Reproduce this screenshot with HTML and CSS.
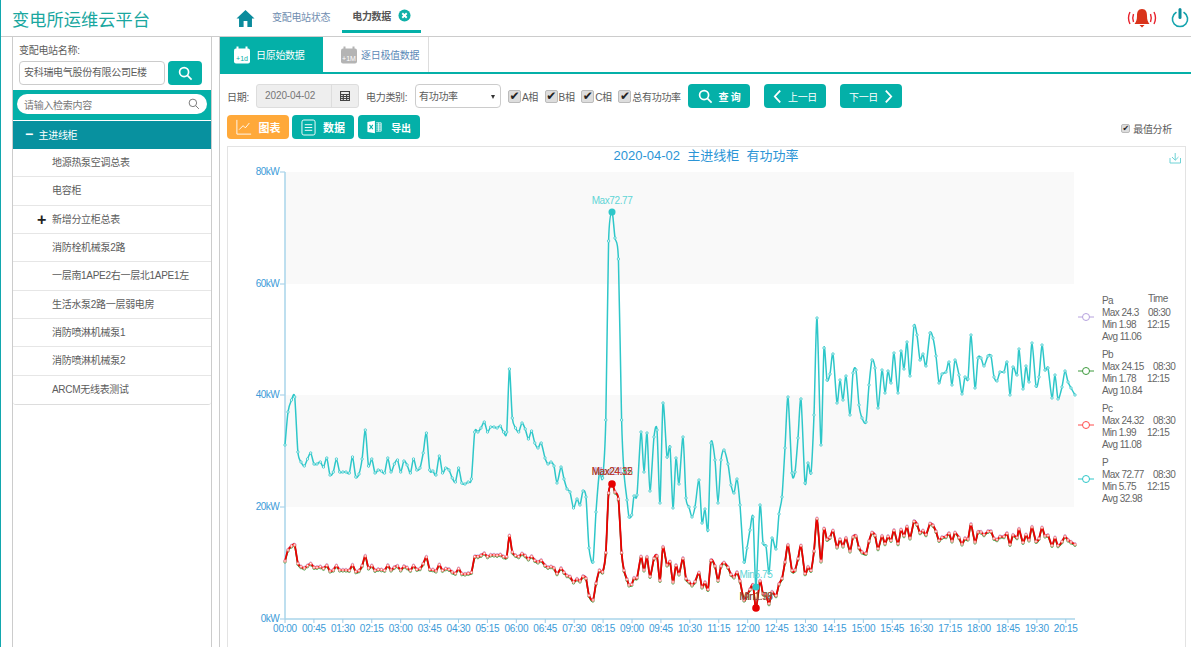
FILE: index.html
```html
<!DOCTYPE html>
<html lang="zh-CN">
<head>
  <meta charset="UTF-8">
  <title>变电所运维云平台</title>
  <link rel="stylesheet" href="styles.css">
</head>
<body>
  <header class="topbar">
    <div class="brand">变电所运维云平台</div>
    <nav class="nav">
      <svg class="home-icon" viewBox="0 0 20 20"><path d="M10 1 L0.5 10 H3.2 V19 H8 V12.5 H12 V19 H16.8 V10 H19.5 Z"/></svg>
      <a class="nav-item">变配电站状态</a>
      <a class="nav-item nav-active">电力数据
        <svg class="close-icon" viewBox="0 0 14 14"><circle cx="7" cy="7" r="6.5"/><path d="M4.6 4.6 L9.4 9.4 M9.4 4.6 L4.6 9.4"/></svg>
      </a>
    </nav>
    <div class="top-actions">
      <svg class="bell-icon" viewBox="0 0 32 20">
        <path class="bell-wave" d="M4 4 Q1 10 4 16 M7.5 6 Q6 10 7.5 14 M28 4 Q31 10 28 16 M24.500 6 Q26 10 24.500 14"/>
        <path class="bell-body" d="M16 1 C12 1 11 4 11 8 C11 12 10 14 8.500 16 H23.500 C22 14 21 12 21 8 C21 4 20 1 16 1 Z M13.500 17 H18.500 L16 19.500 Z"/>
      </svg>
      <svg class="power-icon" viewBox="0 0 18 20">
        <path class="power-ring" d="M5 4.500 A7.600 7.600 0 1 0 13 4.500"/>
        <path class="power-bar" d="M9 1.500 V9.500"/>
      </svg>
    </div>
  </header>

  <div class="layout">
    <aside class="sidebar">
      <div class="station">
        <div class="station-label">变配电站名称:</div>
        <div class="station-row">
          <div class="station-input">安科瑞电气股份有限公司E楼</div>
          <button class="btn station-btn">
            <svg class="search-icon" viewBox="0 0 16 16"><circle cx="6.500" cy="6.500" r="4.800"/><path d="M10 10 L14.500 14.500"/></svg>
          </button>
        </div>
      </div>
      <div class="filter-band">
        <div class="filter-pill">
          <span>请输入检索内容</span>
          <svg class="filter-icon" viewBox="0 0 16 16"><circle cx="6.500" cy="6.500" r="5"/><path d="M10.200 10.200 L14.500 14.500"/></svg>
        </div>
      </div>
      <ul class="tree">
        <li class="tree-root"><span class="tree-sign">−</span>主进线柜</li>
        <li class="tree-item">地源热泵空调总表</li>
        <li class="tree-item">电容柜</li>
        <li class="tree-item"><span class="tree-plus">+</span>新增分立柜总表</li>
        <li class="tree-item">消防栓机械泵2路</li>
        <li class="tree-item">一层南1APE2右一层北1APE1左</li>
        <li class="tree-item">生活水泵2路一层弱电房</li>
        <li class="tree-item">消防喷淋机械泵1</li>
        <li class="tree-item">消防喷淋机械泵2</li>
        <li class="tree-item">ARCM无线表测试</li>
      </ul>
    </aside>

    <main class="content">
      <div class="tabs">
        <div class="tab tab-active">
          <svg class="cal-icon" viewBox="0 0 18 18">
            <rect class="cal-body" x="1" y="2.500" width="16" height="15" rx="2"/>
            <path class="cal-pins" d="M4.500 0.500 V4 M13.500 0.500 V4"/>
            <text class="cal-text" x="9" y="14.500">+1d</text>
          </svg>
          日原始数据
        </div>
        <div class="tab tab-plain">
          <svg class="cal-icon cal-gray" viewBox="0 0 18 18">
            <rect class="cal-body" x="1" y="2.500" width="16" height="15" rx="2"/>
            <path class="cal-pins" d="M4.500 0.500 V4 M13.500 0.500 V4"/>
            <text class="cal-text" x="9" y="14.500">+1M</text>
          </svg>
          逐日极值数据
        </div>
      </div>

      <div class="toolbar">
        <span class="field-label date-label">日期:</span>
        <div class="date-group">
          <span class="date-value">2020-04-02</span>
          <span class="date-addon">
            <svg class="mini-cal" viewBox="0 0 10 10"><path d="M0.500 0.500 H9.500 V9.500 H0.500 Z M0 3.500 H10 M0 5.500 H10 M0 7.500 H10 M3.300 3 V10 M6.600 3 V10"/></svg>
          </span>
        </div>
        <span class="field-label type-label">电力类别:</span>
        <div class="type-select">有功功率</div>
        <div class="checks">
          <label class="check"><span class="box">✔</span>A相</label>
          <label class="check"><span class="box">✔</span>B相</label>
          <label class="check"><span class="box">✔</span>C相</label>
          <label class="check"><span class="box">✔</span>总有功功率</label>
        </div>
        <button class="btn tool-btn query-btn">
          <svg class="search-icon" viewBox="0 0 16 16"><circle cx="6.500" cy="6.500" r="4.800"/><path d="M10 10 L14.500 14.500"/></svg>
          查 询
        </button>
        <button class="btn tool-btn prev-btn">
          <svg class="chev-icon" viewBox="0 0 10 16"><path d="M8 1.500 L2 8 L8 14.500"/></svg>
          上一日
        </button>
        <button class="btn tool-btn next-btn">
          下一日
          <svg class="chev-icon" viewBox="0 0 10 16"><path d="M2 1.500 L8 8 L2 14.500"/></svg>
        </button>
      </div>

      <div class="toolbar toolbar-second">
        <button class="btn view-btn view-orange">
          <svg class="view-icon" viewBox="0 0 18 18"><path d="M1 1 V17 H17 M3.500 12 L8 7.500 L10.500 10 L15 4.500"/></svg>
          图表
        </button>
        <button class="btn view-btn">
          <svg class="view-icon list-icon" viewBox="0 0 16 18"><rect x="1" y="1" width="14" height="16" rx="2"/><path d="M4 6 H12 M4 9 H12 M4 12 H12"/></svg>
          数据
        </button>
        <button class="btn view-btn export-btn">
          <svg class="excel-icon" viewBox="0 0 18 16">
            <path class="excel-sheet" d="M0.500 2 L9.500 0.500 V15.500 L0.500 14 Z"/>
            <path class="excel-grid" d="M11 3 H17 V13 H11 M11 5.500 H17 M11 8 H17 M11 10.500 H17 M14 3 V13"/>
            <path class="excel-x" d="M3 5.500 L7 10.500 M7 5.500 L3 10.500"/>
          </svg>
          导出
        </button>
        <label class="check analysis"><span class="box box-small">✔</span>最值分析</label>
      </div>

      <section class="chart-panel">
        <svg id="chart" class="chart" viewBox="228 147 957 500"></svg>
      </section>
    </main>
  </div>

  <script src="chart.js"></script>
</body>
</html>
```

FILE: styles.css
```css
* {
  box-sizing: border-box;
  margin: 0;
  padding: 0;
}

html, body {
  height: 647px;
  overflow: hidden;
}

body {
  font-family: "Liberation Sans", "Noto Sans CJK SC", sans-serif;
  font-size: 10px;
  letter-spacing: -0.300px;
  color: #5c5c5c;
  background: #fff;
  border-left: 1px solid #12a7ae;
}

.topbar {
  display: flex;
  align-items: center;
  height: 37px;
  border-bottom: 1px solid #ccc;
}

.brand {
  width: 218px;
  padding-left: 11px;
  font-size: 17.250px;
  letter-spacing: 0;
  color: #1aa79f;
}

.nav {
  display: flex;
  align-items: center;
  height: 36px;
  padding-left: 17px;
}

.home-icon {
  width: 19px;
  height: 19px;
  fill: #0a8b9c;
  margin-right: 17px;
}

.nav-item {
  color: #6f8db0;
  margin-right: 12px;
  margin-bottom: 4px;
}

.nav-active {
  display: flex;
  align-items: center;
  align-self: flex-start;
  gap: 7px;
  height: 33px;
  margin-right: 0;
  margin-bottom: 0;
  padding: 0 10px;
  color: #555;
  font-weight: bold;
  border-bottom: 3px solid #04b0a8;
}

.close-icon {
  width: 13px;
  height: 13px;
}

.close-icon circle {
  fill: #0fb0a8;
}

.close-icon path {
  stroke: #fff;
  stroke-width: 2;
  fill: none;
}

.top-actions {
  display: flex;
  align-items: center;
  gap: 13px;
  margin-left: auto;
  padding-right: 2px;
}

.bell-icon {
  width: 32px;
  height: 20px;
}

.bell-wave {
  fill: none;
  stroke: #e8222c;
  stroke-width: 1.400;
}

.bell-body {
  fill: #d9331a;
}

.power-icon {
  width: 18px;
  height: 20px;
  fill: none;
  stroke-linecap: round;
}

.power-ring {
  stroke: #15a4ae;
  stroke-width: 1.600;
}

.power-bar {
  stroke: #0b8e9c;
  stroke-width: 3;
}

.layout {
  display: flex;
  height: 610px;
}

.sidebar {
  width: 200px;
  margin-left: 11px;
  border-left: 1px solid #ccc;
  border-right: 1px solid #ccc;
}

.station {
  height: 53px;
  padding: 8px 6px 0;
}

.station-label {
  line-height: 12px;
  margin-bottom: 4px;
}

.station-row {
  display: flex;
  gap: 3px;
}

.station-input {
  width: 146px;
  height: 24px;
  padding-left: 4px;
  line-height: 22px;
  border: 1px solid #ccc;
  border-radius: 4px;
  white-space: nowrap;
}

.btn {
  display: inline-flex;
  align-items: center;
  justify-content: center;
  border: none;
  border-radius: 4px;
  background: #04b0a8;
  color: #fff;
  font: inherit;
  letter-spacing: inherit;
}

.station-btn {
  width: 34px;
  height: 24px;
}

.search-icon {
  width: 15px;
  height: 15px;
  fill: none;
  stroke: #fff;
  stroke-width: 1.800;
}

.filter-band {
  height: 30px;
  padding: 4px 4px 0;
  background: #04b0a8;
}

.filter-pill {
  display: flex;
  align-items: center;
  justify-content: space-between;
  width: 190px;
  height: 20px;
  padding: 0 7px 0 7px;
  background: #fff;
  border-radius: 10px;
  color: #777;
}

.filter-icon {
  width: 12px;
  height: 12px;
  fill: none;
  stroke: #777;
  stroke-width: 1.300;
}

.tree {
  list-style: none;
  margin-top: 1px;
  border-bottom: 1px solid #ddd;
  border-radius: 0 0 3px 3px;
}

.tree-root {
  height: 28px;
  line-height: 27px;
  padding-left: 12px;
  background: #08919f;
  color: #fff;
}

.tree-sign {
  display: inline-block;
  width: 13.500px;
  font-size: 14px;
  font-weight: bold;
}

.tree-item {
  position: relative;
  height: 28.330px;
  line-height: 28px;
  padding-left: 39px;
  border-bottom: 1px solid #e6e6e6;
}

.tree-item:last-child {
  border-bottom: none;
}

.tree-plus {
  position: absolute;
  left: 24px;
  font-size: 16px;
  font-weight: bold;
  color: #222;
}

.content {
  flex: 1;
  margin-left: 7px;
  border-left: 1px solid #ccc;
  min-width: 0;
}

.tabs {
  display: flex;
  height: 37px;
  border-bottom: 2px solid #04b0a8;
}

.tab {
  display: flex;
  align-items: center;
  gap: 5px;
  height: 35px;
}

.tab-active {
  width: 103px;
  padding-left: 13px;
  background: #04b0a8;
  color: #fff;
}

.tab-plain {
  width: 106px;
  padding-left: 17px;
  gap: 3px;
  color: #5b8ab8;
  border-right: 1px solid #ddd;
}

.cal-icon {
  width: 18px;
  height: 18px;
}

.cal-body {
  fill: #fff;
}

.cal-pins {
  stroke: #fff;
  stroke-width: 2;
}

.cal-text {
  font-size: 7px;
  letter-spacing: 0;
  text-anchor: middle;
  fill: #04b0a8;
}

.cal-gray .cal-body {
  fill: #b4b4b4;
}

.cal-gray .cal-pins {
  stroke: #b4b4b4;
}

.cal-gray .cal-text {
  fill: #fff;
}

.toolbar {
  display: flex;
  align-items: center;
  height: 24px;
  margin: 10px 0 0 7px;
}

.toolbar-second {
  margin-top: 7px;
  gap: 3px;
}

.date-label {
  width: 23px;
}

.date-group {
  display: flex;
  width: 103px;
  height: 24px;
  margin-left: 6px;
  background: #eee;
  border: 1px solid #ddd;
  border-radius: 3px;
  color: #777;
}

.date-value {
  flex: 1;
  padding-left: 8px;
  line-height: 22px;
  letter-spacing: -0.100px;
}

.date-addon {
  display: flex;
  align-items: center;
  justify-content: center;
  width: 27px;
  border-left: 1px solid #ddd;
}

.mini-cal {
  width: 10px;
  height: 10px;
  fill: none;
  stroke: #444;
  stroke-width: 1.200;
}

.type-label {
  width: 43px;
  margin-left: 7px;
  white-space: nowrap;
}

.type-select {
  position: relative;
  width: 86px;
  height: 24px;
  margin-left: 6px;
  padding-left: 3px;
  line-height: 24px;
  background: #fff;
  border: 1px solid #ccc;
  border-radius: 4px;
}

.type-select::after {
  content: "";
  position: absolute;
  top: 10px;
  right: 5px;
  border-top: 4px solid #333;
  border-left: 2.500px solid transparent;
  border-right: 2.500px solid transparent;
}

.checks {
  display: flex;
  gap: 6.500px;
  width: 173px;
  margin-left: 7px;
}

.check {
  display: flex;
  align-items: center;
  gap: 1px;
  white-space: nowrap;
}

.box {
  display: inline-flex;
  align-items: center;
  justify-content: center;
  width: 13px;
  height: 13px;
  background: #ddd;
  border: 1px solid #bbb;
  border-radius: 2px;
  font-family: "DejaVu Sans", sans-serif;
  font-size: 12px;
  color: #222;
}

.tool-btn {
  width: 62px;
  height: 24px;
  gap: 6px;
  flex: none;
}

.query-btn {
  margin-left: 7px;
  font-weight: bold;
}

.prev-btn,
.next-btn {
  margin-left: 14px;
}

.chev-icon {
  width: 9px;
  height: 15px;
  fill: none;
  stroke: #fff;
  stroke-width: 2;
}

.view-btn {
  width: 62px;
  height: 24px;
  gap: 7px;
  font-size: 11px;
  font-weight: bold;
  letter-spacing: 0;
}

.view-orange {
  background: #ffa93a;
}

.export-btn {
  margin-left: 1px;
  gap: 9px;
  font-size: 10px;
  letter-spacing: -0.300px;
}

.view-icon {
  width: 16px;
  height: 16px;
  fill: none;
  stroke: #fff;
  stroke-width: 1;
}

.list-icon {
  width: 15px;
  height: 17px;
}

.excel-icon {
  width: 15px;
  height: 14px;
}

.excel-sheet {
  fill: #fff;
}

.excel-grid {
  fill: none;
  stroke: #fff;
  stroke-width: 1;
}

.excel-x {
  fill: none;
  stroke: #04b0a8;
  stroke-width: 1.300;
}

.analysis {
  margin-left: auto;
  margin-right: 19px;
  gap: 3px;
  padding-top: 2px;
}

.box-small {
  width: 9px;
  height: 9px;
  font-size: 8px;
}

.chart-panel {
  height: 501px;
  margin: 7px 5px 0 7px;
  border: 1px solid #e3e3e3;
  border-bottom: none;
}

.chart {
  display: block;
  width: 957px;
  height: 500px;
}

.band {
  fill: #f9f9f9;
}

.axis-line {
  stroke: #a9d4ea;
  stroke-width: 1.500;
}

.axis-tick {
  stroke: #9ccbe6;
  stroke-width: 1;
}

.axis-label {
  font-size: 10px;
  fill: #3b9bd8;
}

.axis-y {
  text-anchor: end;
  letter-spacing: -0.600px;
}

.axis-x {
  text-anchor: middle;
  letter-spacing: -0.250px;
}

.chart-title {
  font-size: 13px;
  letter-spacing: 0;
  fill: #2b95d6;
  text-anchor: middle;
  white-space: pre;
}

.legend-text {
  font-size: 10px;
  letter-spacing: -0.550px;
  fill: #666;
}

.series {
  fill: none;
  stroke-linejoin: round;
}

.mark-label {
  font-size: 10px;
  letter-spacing: -0.400px;
  text-anchor: middle;
}

.download {
  fill: none;
  stroke: #6fd3d6;
  stroke-width: 1;
}
```

FILE: chart.js
```js
// x,y of the total power curve, in page pixels
var P = [
  [285,445],[288,412],[291.500,400],[294.700,397],[297.900,452],[301,462],[304.300,466],[307.500,459],[310.700,453],
  [314,464],[317,464],[320.300,462],[323.500,467],[326.800,458],[330,475],[333.300,472],[336.400,459],[339.700,472],
  [342.900,472],[346,472],[349.300,473],[352.500,457],[355.800,477],[359,474],[362.100,459],[365.300,430],[368.500,466],
  [371.800,459],[375,473],[378.200,470],[381.400,471],[384.600,473],[387.800,458],[391,472],[394.300,464],[397.500,460],
  [400.700,472],[403.900,461],[407.100,465],[410.400,473],[413.500,459],[416.800,470],[420,468],[423.200,453],[426.400,433],
  [429.700,470],[432.900,471],[436,475],[439.300,456],[442.500,473],[445.700,468],[449,470],[452.200,478],[455.400,482],
  [458.600,468],[461.800,483],[465,484],[468.200,482],[471.400,479],[474.700,432],[477.900,432],[481,428],[484.300,422],
  [487.500,432],[490.700,427],[494,427],[497.100,428],[500.300,426],[503.500,432],[506.700,432],[509.400,369],[512.300,418],
  [515.500,428],[518.700,432],[522,423],[525.200,429],[528.400,439],[531.600,431],[534.800,443],[538,448],[541.200,443],
  [545,458],[548,464],[551,462],[554,466],[557,483],[561,467],[564,479],[567,489],[570,492],[573.500,508],[577,499],
  [580,505],[583,491],[586,497],[589,548],[593,562],[596,512],[599.400,473],[602.600,478],[605.800,420],[608.600,241],
  [612,212],[615,238],[618.400,259],[621.600,420],[624,473],[627,500],[629,517],[631.700,515],[634,496],[637,495],
  [641,432],[644,472],[647,433],[650,491],[654,437],[657,430],[660,503],[663,403],[667,457],[670,447],[673,508],[676,458],
  [679,484],[683,437],[686,498],[689,507],[692,517],[695,507],[699,480],[702,523],[705,509],[708,530],[711,443],[715,460],
  [718,503],[721,460],[724,450],[728,464],[731,485],[734,493],[737,479],[740,505],[744,562],[747,548],[750,530],[753,517],
  [756,587],[760,505],[763,543],[766,546],[769,573],[772,538],[776,549],[779,514],[782,497],[785,448],[788,397],[792,473],
  [795,472],[798,438],[801,399],[805,483],[808,463],[811,473],[814,415],[817,318],[821,445],[824,348],[827,380],[830,374],
  [833,354],[837,403],[840,380],[843,400],[846,376],[850,415],[853,373],[856,370],[859,405],[862,418],[866,422],[869,385],
  [872,360],[875,368],[878,408],[882,370],[885,393],[888,371],[891,383],[894,353],[898,393],[901,351],[904,369],[907,342],
  [910,376],[914,326],[917,335],[920,360],[923,354],[926,366],[930,333],[933,338],[936,356],[939,383],[942,374],[946,372],
  [949,362],[952,385],[955,360],[959,375],[962,394],[965,377],[968,379],[971,335],[975,388],[978,358],[981,358],[984,366],
  [988,356],[991,356],[994,377],[997,381],[1000,372],[1004,372],[1007,362],[1010,395],[1013,367],[1017,375],[1019,349],
  [1023,389],[1026,366],[1029,382],[1032,343],[1036,386],[1039,377],[1042,345],[1045,370],[1048,368],[1052,398],[1055,375],
  [1058,399],[1062,387],[1065,371],[1068,382],[1071,388],[1075,395]
];

var BASE = 619;
var NS = "http://www.w3.org/2000/svg";
var chart = document.getElementById("chart");

function el(name, attrs, text) {
  var node = document.createElementNS(NS, name);
  for (var k in attrs) node.setAttribute(k, attrs[k]);
  if (text !== undefined) node.textContent = text;
  chart.appendChild(node);
  return node;
}

// smooth path through the points, vertices stay on the data
function smooth(pts) {
  var d = "M" + pts[0][0] + " " + pts[0][1];
  for (var i = 0; i < pts.length - 1; i++) {
    var p0 = pts[i - 1] || pts[i], p1 = pts[i], p2 = pts[i + 1], p3 = pts[i + 2] || p2;
    d += " C" + (p1[0] + (p2[0] - p0[0]) / 8) + " " + (p1[1] + (p2[1] - p0[1]) / 8) +
      " " + (p2[0] - (p3[0] - p1[0]) / 8) + " " + (p2[1] - (p3[1] - p1[1]) / 8) +
      " " + p2[0] + " " + p2[1];
  }
  return d;
}

function phase(offset) {
  return P.map(function (p) {
    return [p[0], BASE - (BASE - p[1]) / 3 + offset];
  });
}

function marker(id, color) {
  var m = el("marker", { id: id, markerUnits: "userSpaceOnUse", markerWidth: 5, markerHeight: 5, refX: 2.5, refY: 2.5 });
  var c = document.createElementNS(NS, "circle");
  c.setAttribute("cx", 2.5);
  c.setAttribute("cy", 2.5);
  c.setAttribute("r", 1.2);
  c.setAttribute("fill", "#fff");
  c.setAttribute("stroke", color);
  c.setAttribute("stroke-width", 0.8);
  m.appendChild(c);
}

function line(pts, color, width, id) {
  el("path", {
    "class": "series",
    d: smooth(pts),
    stroke: color,
    "stroke-width": width,
    "marker-start": "url(#" + id + ")",
    "marker-mid": "url(#" + id + ")",
    "marker-end": "url(#" + id + ")"
  });
}

// bands and grid
el("rect", { "class": "band", x: 285, y: 172, width: 789, height: 112 });
el("rect", { "class": "band", x: 285, y: 395, width: 789, height: 112 });

[["80kW", 172], ["60kW", 284], ["40kW", 395], ["20kW", 507], ["0kW", 619]].forEach(function (t) {
  el("line", { "class": "axis-tick", x1: 280, x2: 285, y1: t[1], y2: t[1] });
  el("text", { "class": "axis-label axis-y", x: 279, y: t[1] + 3 }, t[0]);
});

el("line", { "class": "axis-line", x1: 285, x2: 285, y1: 172, y2: 619 });
el("line", { "class": "axis-line", x1: 285, x2: 1075, y1: 619, y2: 619 });

for (var m = 0; m <= 1215; m += 45) {
  var x = 285 + m / 5 * 3.213;
  var hh = Math.floor(m / 60), mm = m % 60;
  var label = (hh < 10 ? "0" : "") + hh + ":" + (mm < 10 ? "0" : "") + mm;
  el("line", { "class": "axis-tick", x1: x, x2: x, y1: 619, y2: 623 });
  el("text", { "class": "axis-label axis-x", x: x, y: 632 }, label);
}

el("text", { "class": "chart-title", x: 706, y: 160 }, "2020-04-02  主进线柜  有功功率");
el("path", { "class": "download", d: "M1170 158 V163 H1180.500 V158 M1175.200 153 V160 M1172 157 L1175.200 160.300 L1178.500 157" });

// series
marker("dot-a", "#b6a2de");
marker("dot-b", "#3d9a3d");
marker("dot-c", "#ff6b6b");
marker("dot-p", "#2ec7c9");
line(phase(-0.6), "#b6a2de", 1.5, "dot-a");
line(phase(1), "#2f8f2f", 1.5, "dot-b");
line(phase(0), "#ee0000", 1.8, "dot-c");
line(P, "#2ec7c9", 1.5, "dot-p");

// max and min pins
el("circle", { cx: 612, cy: 212, r: 3.5, fill: "#2ec7c9" });
el("text", { "class": "mark-label", x: 612, y: 204, fill: "#5fd5d6" }, "Max72.77");
el("circle", { cx: 612, cy: 484, r: 3.8, fill: "#e60000" });
el("text", { "class": "mark-label", x: 612, y: 475, fill: "#b6a2de" }, "Max24.3");
el("text", { "class": "mark-label", x: 612, y: 475, fill: "#3d8a3d" }, "Max24.15");
el("text", { "class": "mark-label", x: 612, y: 475, fill: "#d23030" }, "Max24.32");
el("circle", { cx: 756, cy: 587, r: 3.5, fill: "#2ec7c9" });
el("text", { "class": "mark-label", x: 756, y: 578, fill: "#5fd5d6" }, "Min5.75");
el("circle", { cx: 756, cy: 608, r: 3.8, fill: "#e60000" });
el("text", { "class": "mark-label", x: 756, y: 600, fill: "#3d8a3d" }, "Min1.78");
el("text", { "class": "mark-label", x: 756, y: 600, fill: "#b04040" }, "Min1.99");

// legend
var legend = [
  { name: "Pa", color: "#b6a2de", y: 304, max: "24.3", min: "1.98", avg: "11.06", tx: 1148 },
  { name: "Pb", color: "#3d9a3d", y: 358, max: "24.15", min: "1.78", avg: "10.84", tx: 1153 },
  { name: "Pc", color: "#ff4d4d", y: 412, max: "24.32", min: "1.99", avg: "11.08", tx: 1153 },
  { name: "P", color: "#2ec7c9", y: 466, max: "72.77", min: "5.75", avg: "32.98", tx: 1153 }
];

el("text", { "class": "legend-text", x: 1148, y: 302 }, "Time");
legend.forEach(function (s) {
  el("line", { x1: 1078, x2: 1094, y1: s.y + 13, y2: s.y + 13, stroke: s.color, "stroke-width": 1 });
  el("circle", { cx: 1086, cy: s.y + 13, r: 3.5, fill: "#fff", stroke: s.color, "stroke-width": 1 });
  el("text", { "class": "legend-text", x: 1102, y: s.y }, s.name);
  el("text", { "class": "legend-text", x: 1102, y: s.y + 12 }, "Max " + s.max);
  el("text", { "class": "legend-text", x: s.tx, y: s.y + 12 }, "08:30");
  el("text", { "class": "legend-text", x: 1102, y: s.y + 24 }, "Min " + s.min);
  el("text", { "class": "legend-text", x: 1147, y: s.y + 24 }, "12:15");
  el("text", { "class": "legend-text", x: 1102, y: s.y + 36 }, "Avg " + s.avg);
});
```
